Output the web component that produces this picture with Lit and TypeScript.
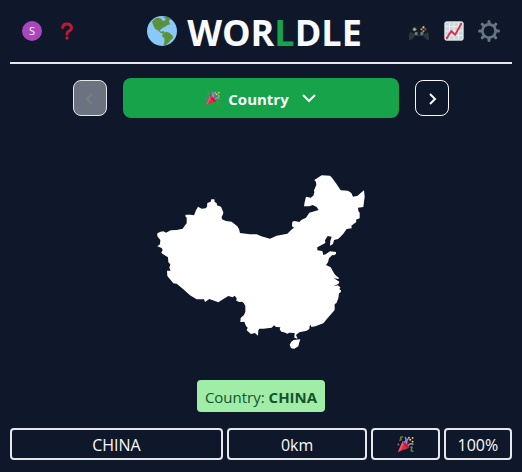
import { LitElement, html, svg, css } from "lit";
import { customElement, state } from "lit/decorators.js";

const party = svg`
  <path d="M2 34 12 11Q23 14 26 25Z" fill="#dd2e44"/>
  <path d="M2 34 12 11 16 13 7 31Z" fill="#ea596e"/>
  <path d="M12 11Q13 18 18 22T26 25Q24 17 19 13T12 11Z" fill="#be1931"/>
  <path d="M15 14Q22 8 17 2M20 17Q20 7 27 3" fill="none" stroke="#9a80d6" stroke-width="3"/>
  <path d="M23 20Q29 14 35 18" fill="none" stroke="#aa8dd8" stroke-width="3"/>
  <path d="M5 9Q10 9 8 5T13 2M28 24Q34 21 31 27T35 32" fill="none" stroke="#5c913b" stroke-width="3"/>
  <g fill="#ffcc4d"><circle cx="28" cy="8" r="2.2"/><circle cx="33" cy="4" r="2"/><circle cx="33" cy="12" r="2"/><circle cx="25" cy="3" r="1.5"/></g>
  <g fill="#9266cc"><circle cx="3" cy="18" r="2"/><circle cx="23" cy="13" r="1.5"/></g>`;

const globe = svg`
  <circle cx="18" cy="18" r="18" fill="#88c9f9"/>
  <path d="M6 7Q8 3 13 2L17 3 18 5 21 6 23 3 26 4 27 8 28 10 24 11 22 13 19 14 17 16 15 17 17 19 20 18 21 20 19 21 16 20 13 17 10 16 8 12Z" fill="#5c913b"/>
  <path d="M19 21 23 19 27 20 31 24 31 27 28 29 26 32 22 35 20 35 21 30 21 27 18 24Z" fill="#5c913b"/>
  <path d="M19 1 25 1 29 4 27 5 22 3Z" fill="#5c913b"/>`;

const gamepad = svg`
  <path d="M0 34Q-1 24 4 12Q6 7 11 8L14 10H22L25 8Q30 7 32 12Q37 24 36 34Q31 35 26 27H10Q5 35 0 34Z" fill="#30363a"/>
  <path d="M4 12Q6 7 11 8L14 10H22L25 8Q30 7 32 12L34 20Q27 26 18 25T2 20Z" fill="#17191b"/>
  <g fill="#66757f"><circle cx="10" cy="15" r="3.4"/><circle cx="13" cy="22.500" r="3"/><circle cx="23" cy="22.500" r="3"/></g>
  <path d="M10 12V18M7 15H13" stroke="#99aab5" stroke-width="1.6"/>
  <circle cx="26" cy="11.500" r="2" fill="#ffcc4d"/><circle cx="29.500" cy="15" r="2" fill="#dd2e44"/>
  <circle cx="26" cy="18.500" r="2" fill="#77b255"/><circle cx="22.500" cy="15" r="2" fill="#55acee"/>`;

const chart = svg`
  <rect x="1" y="1" width="34" height="34" rx="3" fill="#ccd6dd"/>
  <path d="M3 10H33M3 18H33M3 26H33M10 3V33M18 3V33M26 3V33" stroke="#f5f8fa" stroke-width="1.500"/>
  <rect x="1.800" y="1.800" width="32.400" height="32.400" rx="2.500" fill="none" stroke="#e8eef1" stroke-width="1.600"/>
  <path d="M5 31 13 18 20 25 31 5" fill="none" stroke="#dd2e44" stroke-width="3.400" stroke-linecap="round" stroke-linejoin="round"/>`;

const gear = svg`
  <g stroke="#66757f" fill="none">
    <circle cx="18" cy="18" r="10.800" stroke-width="4.400"/>
    <path d="M18 2.500V6M18 30V33.500M2.500 18H6M30 18H33.500M6.900 6.900 9.500 9.500M26.500 26.500 29.100 29.100M29.100 6.900 26.500 9.500M9.500 26.500 6.900 29.100" stroke-width="5" stroke-linecap="round"/>
  </g>`;

const question = svg`
  <path d="M9.500 11Q10 4 18 4T27 11Q27 16 22 18Q18 20 18 24" fill="none" stroke="#be1931" stroke-width="6" stroke-linecap="round"/>
  <circle cx="18" cy="32" r="3.300" fill="#be1931"/>`;

const country = svg`
  <path d="M22 205 32 200 40 199 48 203 62 196 80 195 98 191 104 182 110 175 110 158 106 154 107 149 121 149 132 151 138 136 144 125 155 131 167 130 171 125 172 114 182 110 184 103 193 103 194 111 200 114 201 121 213 125 220 142 219 148 215 155 216 163 228 168 245 170 262 184 267 192 270 204 300 208 320 208 334 214 360 221 380 212 412 206 424 194 432 188 426 184 427 170 433 168 448 171 454 165 468 158 478 143 506 135 500 126 488 120 478 124 462 124 464 112 468 95 482 98 490 92 493 82 492 76 499 60 498 51 493 45 515 31 540 32 546 38 558 55 572 76 594 77 604 84 609 95 623 92 632 84 642 76 644 95 640 126 624 128 625 138 629 143 629 160 618 164 619 171 604 182 605 190 590 192 580 206 570 217 564 222 552 225 549 237 540 242 541 227 545 215 533 213 525 226 526 234 502 247 502 256 517 258 520 270 527 268 540 259 558 261 558 267 552 271 547 270 537 280 534 292 528 300 542 307 552 325 558 332 565 337 567 342 552 340 568 350 566 356 550 364 563 361 571 367 568 373 573 376 572 382 567 385 565 400 559 415 554 417 554 435 535 457 520 475 508 479 496 484 484 486 482 479 479 483 478 492 470 497 448 502 438 510 443 521 433 518 434 504 418 503 412 506 402 502 394 500 389 493 391 487 378 486 372 481 365 488 340 491 328 491 325 496 324 512 315 504 303 507 290 496 293 488 288 483 283 470 271 471 272 459 282 450 286 440 286 423 281 414 276 410 268 411 259 407 260 400 254 392 248 397 235 393 219 403 205 412 178 402 165 411 162 403 140 403 120 391 100 373 80 356 70 355 52 333 51 317 62 317 58 308 61 298 55 292 54 277 38 267 34 263 38 255 35 249 22 244 30 238 31 225 22 214Z"/>
  <path d="M419 539 424 530 431 525 451 523 448 532 445 544 433 551 423 550Z"/>`;

interface Guess {
  name: string;
  distance: string;
  percent: string;
}

@customElement("app-root")
export class AppRoot extends LitElement {
  @state() private guesses: Guess[] = [{ name: "CHINA", distance: "0km", percent: "100%" }];

  static styles = css`
    :host {
      display: flex;
      flex-direction: column;
      box-sizing: border-box;
      min-height: 100vh;
      padding: 0 10px 12px;
      background: #0f172a;
      color: #f8fafc;
      font: 16px/24px "Open Sans", "Noto Sans", sans-serif;
    }
    button {
      display: flex;
      align-items: center;
      justify-content: center;
      box-sizing: border-box;
      margin: 0;
      padding: 0;
      border: 0;
      background: none;
      color: inherit;
      font: inherit;
      cursor: pointer;
    }
    svg { display: block; flex: none; }
    header {
      display: flex;
      align-items: center;
      height: 62px;
      padding: 0 13px 0 12px;
      border-bottom: 2px solid #e5e7eb;
    }
    .tools { display: flex; gap: 15px; }
    .icon { width: 20px; height: 20px; }
    .avatar {
      border-radius: 50%;
      background: #ab47bc;
      font-size: 11px;
      line-height: 20px;
    }
    h1 {
      display: flex;
      flex: 1;
      align-items: center;
      justify-content: center;
      gap: 10px;
      margin: 0;
      padding-left: 23px;
      font-size: 36px;
      line-height: 40px;
      font-weight: 700;
    }
    .title { padding-top: 4px; }
    .accent { color: #16a34a; }
    nav {
      display: flex;
      align-items: center;
      gap: 16px;
      width: 75%;
      margin: 14px auto 0;
    }
    .step {
      width: 34px;
      height: 36px;
      border: 1px solid #f8fafc;
      border-radius: 8px;
    }
    .step:disabled { background: #6b7280; border-color: #e5e7eb; color: #7c7c7c; cursor: default; }
    .round {
      flex: 1;
      gap: 8px;
      height: 40px;
      border-radius: 8px;
      background: #16a34a;
      font-size: 15px;
      font-weight: 700;
    }
    .text { padding-top: 2px; }
    .chevron { margin-left: 4px; }
    .shape {
      flex: 1;
      display: flex;
      align-items: center;
      justify-content: center;
      padding-top: 26px;
    }
    .map { fill: #fff; }
    .answer {
      align-self: center;
      margin: 0 0 16px;
      padding: 5px 8px 3px;
      border-radius: 4px;
      background: #a0eda8;
      color: #14532d;
      font-size: 15px;
    }
    .answer strong { font-weight: 700; }
    .guess {
      display: grid;
      grid-template-columns: repeat(7, 1fr);
      gap: 4px;
      margin: 0;
      padding: 0;
      list-style: none;
    }
    .cell {
      display: flex;
      align-items: center;
      justify-content: center;
      height: 28px;
      border: 2px solid #e5e7eb;
      border-radius: 4px;
    }
    .name { grid-column: span 3; }
    .distance { grid-column: span 2; }
  `;

  private icon(shape: unknown, size: number) {
    return html`<svg width=${size} height=${size} viewBox="0 0 36 36" aria-hidden="true">${shape}</svg>`;
  }

  private chevron(d: string) {
    return html`<svg width="16" height="16" viewBox="0 0 16 16" fill="none"
      stroke="currentColor" stroke-width="2" aria-hidden="true"><path d=${d} /></svg>`;
  }

  render() {
    return html`
      <header>
        <div class="tools">
          <button class="icon avatar" aria-label="Account">S</button>
          <button class="icon" aria-label="How to play">${this.icon(question, 18)}</button>
        </div>
        <h1>${this.icon(globe, 30)}<span class="title">WOR<span class="accent">L</span>DLE</span></h1>
        <div class="tools">
          <button class="icon" aria-label="Games">${this.icon(gamepad, 20)}</button>
          <button class="icon" aria-label="Statistics">${this.icon(chart, 20)}</button>
          <button class="icon" aria-label="Settings">${this.icon(gear, 22)}</button>
        </div>
      </header>
      <nav>
        <button class="step" disabled aria-label="Previous round">${this.chevron("M10 4 5 9 10 14")}</button>
        <button class="round">
          ${this.icon(party, 15)}<span class="text">Country</span>
          <span class="chevron">${this.chevron("M2 5 8 11 14 5")}</span>
        </button>
        <button class="step" aria-label="Next round">${this.chevron("M6 4 11 9 6 14")}</button>
      </nav>
      <div class="shape">
        <svg class="map" width="230" height="195" viewBox="-12 0 690 585" role="img" aria-label="Country outline">${country}</svg>
      </div>
      <p class="answer">Country: <strong>CHINA</strong></p>
      ${this.guesses.map(
        (g) => html`<ul class="guess">
          <li class="cell name"><span class="text">${g.name}</span></li>
          <li class="cell distance"><span class="text">${g.distance}</span></li>
          <li class="cell">${this.icon(party, 17)}</li>
          <li class="cell"><span class="text">${g.percent}</span></li>
        </ul>`
      )}
    `;
  }
}
